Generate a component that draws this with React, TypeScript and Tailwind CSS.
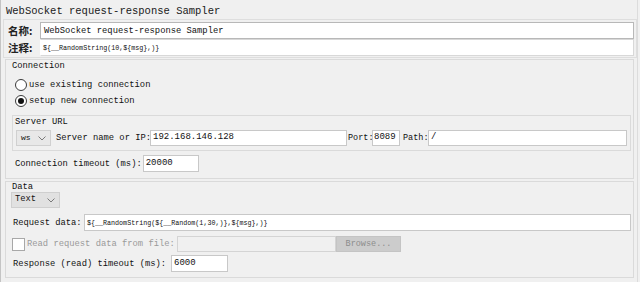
import React from "react";

const Chevron = () => (
  <svg width="8" height="5" viewBox="0 0 8 5" className="shrink-0">
    <polyline points="0.5,0.5 4,4 7.5,0.5" fill="none" stroke="#7a7a7a" strokeWidth="1" />
  </svg>
);

const Radio = ({ on, label }: { on?: boolean; label: string }) => (
  <div className="h-[16px] flex items-center pl-[9px]">
    <div className="w-[12px] h-[12px] rounded-full border border-[#3a3a3a] bg-white flex items-center justify-center shrink-0">
      {on && <div className="w-[6px] h-[6px] rounded-full bg-[#111]" />}
    </div>
    <span className="ml-[2px] text-[8.8px] leading-[12px]">{label}</span>
  </div>
);

export default function App() {
  return (
    <div className="w-[640px] h-[282px] bg-[#f0f0f0] overflow-hidden border-l border-[#c4c4c4] text-[#111] font-['Liberation_Mono',monospace]">
      <div className="w-[637px] h-[282px] border-r border-[#dcdcdc]">
        <div className="h-[19px] pl-[5px] pt-[5px] text-[10.5px] leading-[12px] text-[#1a1a1a]">
          WebSocket request-response Sampler
        </div>
        {/* name / comment panel */}
        <div className="ml-[2px] w-[634px] border border-[#dedede] pl-[4px] pr-[2px] pt-[2px] pb-[1px]">
          <div className="flex h-[17px] items-center">
            <span className="w-[32px] shrink-0 text-[10.5px] leading-[12px] font-bold font-['Noto_Sans_CJK_SC',sans-serif] text-[#222]">
              名称:
            </span>
            <div className="flex-1 h-[17px] bg-white border border-[#b8b8b8] flex items-center pl-[3px] text-[8.8px] leading-[12px]">
              WebSocket request-response Sampler
            </div>
          </div>
          <div className="flex h-[17px] items-center">
            <span className="w-[32px] shrink-0 text-[10.5px] leading-[12px] font-bold font-['Noto_Sans_CJK_SC',sans-serif] text-[#222]">
              注释:
            </span>
            <div className="flex-1 h-[17px] bg-white border border-[#d8d8d8] border-l-white flex items-center pl-[2px] text-[6.7px] leading-[10px]">
              {"${__RandomString(10,${msg},)}"}
            </div>
          </div>
        </div>

        {/* Connection */}
        <div className="ml-[4px] mt-[1px] w-[629px] h-[120px] border border-[#dadada] flex flex-col">
          <div className="pl-[6px] h-[12px] text-[8.8px] leading-[12px]">Connection</div>
          <div className="mt-[5px]">
            <Radio label="use existing connection" />
            <Radio on label="setup new connection" />
          </div>
          <div className="ml-[6px] mt-[6px] w-[619px] border border-[#dadada] pb-[4px]">
            <div className="pl-[2px] h-[12px] text-[8.8px] leading-[12px]">Server URL</div>
            <div className="mt-[2px] h-[16px] flex items-center">
              <div className="ml-[3px] w-[35px] h-[16px] bg-[#e8e8e8] border border-[#d0d0d0] flex items-center justify-between px-[4px] text-[8px]">
                <span>ws</span>
                <Chevron />
              </div>
              <span className="ml-[5px] w-[94px] shrink-0 text-[8.8px] leading-[12px] whitespace-nowrap">Server name or IP:</span>
              <div className="w-[197px] h-[16px] bg-white border border-[#c8c8c8] flex items-center pl-[2px] text-[9px]">
                192.168.146.128
              </div>
              <span className="ml-[1px] w-[24px] shrink-0 text-[8.5px] leading-[12px] whitespace-nowrap">Port:</span>
              <div className="w-[28px] h-[16px] bg-white border border-[#c8c8c8] flex items-center pl-[1px] text-[9px]">
                8089
              </div>
              <span className="ml-[3px] w-[25px] shrink-0 text-[8.5px] leading-[12px] whitespace-nowrap">Path:</span>
              <div className="flex-1 mr-[3px] h-[16px] bg-white border border-[#c8c8c8] flex items-center pl-[2px] text-[9px]">
                /
              </div>
            </div>
          </div>
          <div className="mt-[4px] h-[17px] flex items-center pl-[9px]">
            <span className="text-[8.8px] leading-[12px] whitespace-nowrap">Connection timeout (ms):</span>
            <div className="ml-[1px] w-[56px] h-[17px] bg-white border border-[#c8c8c8] flex items-center pl-[2px] text-[9px]">
              20000
            </div>
          </div>
        </div>

        {/* Data */}
        <div className="ml-[4px] mt-[2px] w-[629px] h-[97px] border border-[#dadada] flex flex-col">
          <div className="pl-[6px] h-[10px] text-[8.8px] leading-[10px]">Data</div>
          <div className="ml-[5px] w-[49px] h-[16px] bg-[#e1e1e1] border border-[#cfcfcf] flex items-center justify-between pl-[3px] pr-[4px] text-[8.8px]">
            <span>Text</span>
            <Chevron />
          </div>
          <div className="mt-[6px] h-[17px] flex items-center pl-[7px]">
            <span className="w-[71px] shrink-0 text-[8.8px] leading-[12px] whitespace-nowrap">Request data:</span>
            <div className="flex-1 mr-[2px] h-[17px] bg-white border border-[#c8c8c8] flex items-center pl-[2px] text-[6.7px] leading-[10px]">
              {"${__RandomString(${__Random(1,30,)},${msg},)}"}
            </div>
          </div>
          <div className="mt-[5px] h-[16px] flex items-center pl-[6px]">
            <div className="w-[13px] h-[13px] bg-white border border-[#a8a8a8] shrink-0" />
            <span className="ml-[2px] w-[150px] shrink-0 text-[8.8px] leading-[12px] text-[#9a9a9a] whitespace-nowrap">
              Read request data from file:
            </span>
            <div className="w-[159px] h-[16px] bg-[#f0f0f0] border border-[#d4d4d4]" />
            <div className="w-[65px] h-[16px] bg-[#cccccc] border border-[#c4c4c4] flex items-center justify-center text-[8.5px] text-[#8c8c8c]">
              Browse...
            </div>
          </div>
          <div className="mt-[3px] h-[17px] flex items-center pl-[7px]">
            <span className="w-[158px] shrink-0 text-[8.8px] leading-[12px] whitespace-nowrap">Response (read) timeout (ms):</span>
            <div className="w-[57px] h-[17px] bg-white border border-[#c8c8c8] flex items-center pl-[2px] text-[9px]">
              6000
            </div>
          </div>
        </div>
      </div>
    </div>
  );
}
